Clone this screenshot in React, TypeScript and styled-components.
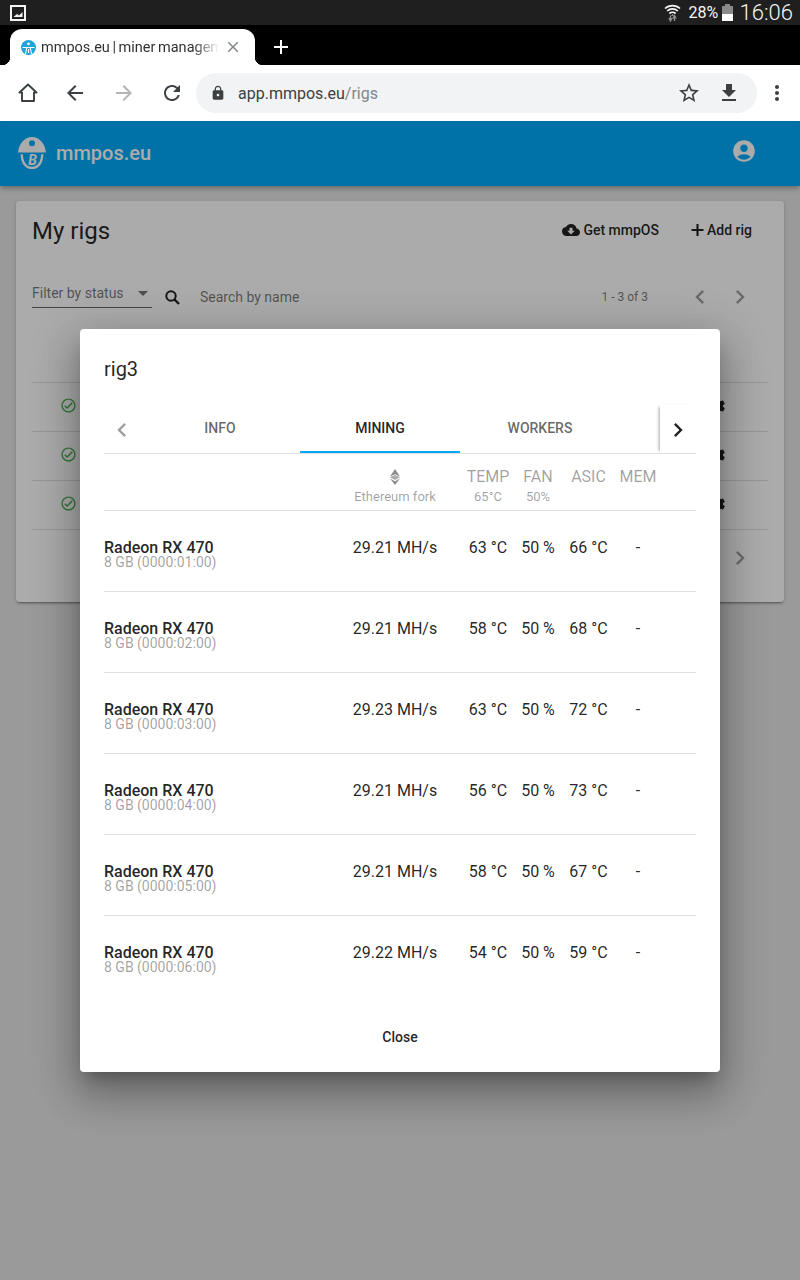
import styled, { createGlobalStyle } from 'styled-components';
import {
  MdAccountCircle,
  MdAdd,
  MdArrowBack,
  MdArrowDropDown,
  MdArrowForward,
  MdChevronLeft,
  MdChevronRight,
  MdClose,
  MdCloudDownload,
  MdFileDownload,
  MdLock,
  MdMoreVert,
  MdOutlineCheckCircle,
  MdRefresh,
  MdSettings,
  MdStarBorder,
} from 'react-icons/md';

const GlobalStyle = createGlobalStyle`
  html, body {
    margin: 0;
    padding: 0;
    background: #e6e6e6;
    font-family: Roboto, "Liberation Sans", sans-serif;
  }
  * {
    box-sizing: border-box;
  }
`;

const Shell = styled.div`
  width: 800px;
  height: 1280px;
  display: flex;
  flex-direction: column;
  overflow: hidden;
`;

const StatusBar = styled.div`
  height: 25px;
  flex: none;
  background: #1f1f1f;
  color: #f5f5f5;
  display: flex;
  align-items: center;
  padding: 0 7px 0 10px;
`;

const StatusRight = styled.div`
  margin-left: auto;
  display: flex;
  align-items: center;
`;

const Percent = styled.span`
  font-size: 16px;
  margin-left: 8px;
  width: 33px;
`;

const Clock = styled.span`
  font-size: 22px;
  font-weight: 300;
  margin-left: 7px;
`;

const TabStrip = styled.div`
  height: 40px;
  flex: none;
  background: #000;
  display: flex;
  align-items: flex-end;
  padding-left: 10px;
`;

const Tab = styled.div`
  position: relative;
  width: 245px;
  height: 36px;
  background: #fff;
  border-radius: 12px 12px 0 0;
  display: flex;
  align-items: center;
  padding: 0 13px 0 11px;
  color: #3c4043;

  &::before,
  &::after {
    content: '';
    position: absolute;
    bottom: 0;
    width: 8px;
    height: 8px;
  }
  &::before {
    left: -8px;
    background: radial-gradient(circle at 0 0, #000 8px, #fff 8.5px);
  }
  &::after {
    right: -8px;
    background: radial-gradient(circle at 100% 0, #000 8px, #fff 8.5px);
  }
`;

const TabTitle = styled.span`
  flex: 1;
  margin: 0 5px;
  font-size: 14.5px;
  word-spacing: -1px;
  white-space: nowrap;
  overflow: hidden;
  color: #303134;
  -webkit-mask-image: linear-gradient(to right, #000 86%, transparent 100%);
  mask-image: linear-gradient(to right, #000 86%, transparent 100%);
`;

const NewTab = styled.div`
  color: #fff;
  display: flex;
  margin: 0 0 6px 14px;
`;

const Toolbar = styled.div`
  height: 56px;
  flex: none;
  background: #fff;
  display: grid;
  grid-template-columns: 56px 38px 60px 36px 1fr 40px;
  align-items: center;
  padding-right: 3px;
`;

const ToolButton = styled.div<{ $muted?: boolean }>`
  display: flex;
  justify-content: center;
  color: ${(p) => (p.$muted ? '#b4b5b7' : '#3c4043')};
`;

const Omnibox = styled.div`
  height: 40px;
  margin-left: 6px;
  border-radius: 20px;
  background: #f1f3f4;
  display: flex;
  align-items: center;
  color: #3c4043;
  padding: 0 16px 0 14px;
`;

const Url = styled.div`
  font-size: 16px;
  margin-left: 12px;
  flex: 1;
  color: #3c4043;

  span {
    color: #80868b;
  }
`;

const OmniActions = styled.div`
  display: flex;
  gap: 16px;
  align-items: center;
`;

const AppArea = styled.div`
  position: relative;
  flex: 1;
  background: #e6e6e6;
`;

const AppBar = styled.header`
  height: 65px;
  background: #00abfa;
  color: #fff;
  display: flex;
  align-items: center;
  padding: 0 43px 1px 18px;
  box-shadow: 0 2px 4px -1px rgba(0, 0, 0, 0.2), 0 4px 5px rgba(0, 0, 0, 0.14);
`;

const Brand = styled.div`
  font-size: 20px;
  font-weight: 500;
  margin-left: 10px;
  flex: 1;
`;

const AccountIcon = styled(MdAccountCircle)`
  margin-bottom: 4px;
`;

const Card = styled.section`
  margin: 15px 16px 0;
  height: 401px;
  background: #fff;
  border-radius: 4px;
  padding: 0 16px;
  box-shadow: 0 3px 1px -2px rgba(0, 0, 0, 0.2), 0 2px 2px rgba(0, 0, 0, 0.14), 0 1px 5px rgba(0, 0, 0, 0.12);
  color: rgba(0, 0, 0, 0.87);
`;

const CardHead = styled.div`
  height: 60px;
  display: flex;
  align-items: center;
`;

const Heading = styled.h1`
  font-size: 24px;
  font-weight: 400;
  margin: 0;
  flex: 1;
`;

const TextAction = styled.div`
  display: flex;
  align-items: center;
  gap: 3px;
  font-size: 14px;
  font-weight: 500;
  margin-right: 16px;
  padding-bottom: 2px;

  & + & {
    margin-left: 16px;
  }
`;

const FilterRow = styled.div`
  height: 72px;
  display: flex;
  align-items: center;
  color: rgba(0, 0, 0, 0.54);
`;

const Select = styled.div`
  width: 120px;
  height: 29px;
  margin-top: -8px;
  border-bottom: 1px solid rgba(0, 0, 0, 0.6);
  display: flex;
  align-items: center;
  justify-content: space-between;
  font-size: 14px;
  padding-top: 1px;
`;

const SelectArrow = styled(MdArrowDropDown)`
  margin-right: -3px;
`;

const SearchIcon = styled.div`
  margin-left: 13px;
  display: flex;
  color: rgba(0, 0, 0, 0.87);
`;

const SearchLabel = styled.div`
  margin-left: 20px;
  flex: 1;
  font-size: 14px;
`;

const RangeLabel = styled.div`
  font-size: 12px;
`;

const Pager = styled.div`
  display: flex;
  gap: 12px;
  margin: 0 14px 0 38px;
  color: rgba(0, 0, 0, 0.38);
`;

const RigRow = styled.div`
  height: 49px;
  border-top: 1px solid rgba(0, 0, 0, 0.12);
  display: flex;
  align-items: center;
  justify-content: space-between;
  padding: 0 41px 3px 28px;
`;

const RigsTable = styled.div`
  margin-top: 49px;
  border-bottom: 1px solid rgba(0, 0, 0, 0.12);
`;

const RigStatus = styled.div`
  display: flex;
  color: #4caf50;
`;

const RigTool = styled.div`
  display: flex;
  color: rgba(0, 0, 0, 0.87);
`;

const CardFoot = styled.div`
  display: flex;
  justify-content: flex-end;
  padding: 14px 14px 0 0;
  color: rgba(0, 0, 0, 0.38);
`;

const Backdrop = styled.div`
  position: absolute;
  inset: 0;
  background: rgba(0, 0, 0, 0.33);
  display: flex;
  align-items: center;
  justify-content: center;
`;

const Dialog = styled.div`
  width: 640px;
  height: 743px;
  background: #fff;
  border-radius: 4px;
  padding: 24px 24px 0;
  display: flex;
  flex-direction: column;
  color: rgba(0, 0, 0, 0.87);
  box-shadow: 0 11px 15px -7px rgba(0, 0, 0, 0.26), 0 24px 38px 3px rgba(0, 0, 0, 0.2), 0 9px 46px 8px rgba(0, 0, 0, 0.16);
`;

const DialogTitle = styled.h2`
  font-size: 20px;
  font-weight: 400;
  line-height: 32px;
  margin: 0 0 20px;
`;

const TabBar = styled.div`
  height: 49px;
  flex: none;
  display: flex;
  border-bottom: 1px solid #e0e0e0;
`;

const ScrollButton = styled.div<{ $active?: boolean }>`
  width: 36px;
  flex: none;
  display: flex;
  align-items: center;
  justify-content: center;
  padding-top: 2px;
  color: ${(p) => (p.$active ? 'rgba(0, 0, 0, 0.87)' : 'rgba(0, 0, 0, 0.38)')};
  ${(p) => p.$active && 'box-shadow: -3px 0 3px -2px rgba(0, 0, 0, 0.35);'}
`;

const TabList = styled.div`
  flex: 1;
  display: flex;
`;

const TabLabel = styled.div<{ $active?: boolean }>`
  width: 160px;
  display: flex;
  align-items: center;
  justify-content: center;
  font-size: 14px;
  font-weight: 500;
  color: ${(p) => (p.$active ? 'rgba(0, 0, 0, 0.87)' : 'rgba(0, 0, 0, 0.6)')};
  border-bottom: 2px solid ${(p) => (p.$active ? '#03a9f4' : 'transparent')};
`;

const GridRow = styled.div`
  display: grid;
  grid-template-columns: 223px 136px 50px 50px 51px 48px;
  text-align: center;
`;

const HeadRow = styled(GridRow)`
  height: 57px;
  flex: none;
  border-bottom: 1px solid #e0e0e0;
  color: rgba(0, 0, 0, 0.38);
  padding-top: 13px;
`;

const HeadCell = styled.div`
  font-size: 16px;
  line-height: 19px;
`;

const HeadSub = styled.div`
  font-size: 13px;
  line-height: 15px;
  margin-top: 3px;
  white-space: nowrap;
`;

const HashIcon = styled.div`
  display: flex;
  justify-content: center;
  padding-top: 2px;
  height: 19px;
`;

const WorkerRow = styled(GridRow)<{ $last?: boolean }>`
  height: 81px;
  flex: none;
  padding-top: 27px;
  font-size: 16px;
  line-height: 20px;
  border-bottom: ${(p) => (p.$last ? 'none' : '1px solid #e0e0e0')};
`;

const NameCell = styled.div`
  text-align: left;
  padding-top: 2px;
`;

const GpuName = styled.div`
  font-weight: 500;
  line-height: 16px;
`;

const GpuInfo = styled.div`
  font-size: 14px;
  line-height: 12px;
  color: rgba(0, 0, 0, 0.38);
`;

const Actions = styled.div`
  display: flex;
  justify-content: center;
  margin-top: 30px;
  font-size: 14px;
  font-weight: 500;
  line-height: 20px;
`;

const workers = [
  { bus: '01', hash: '29.21', temp: 63, asic: 66 },
  { bus: '02', hash: '29.21', temp: 58, asic: 68 },
  { bus: '03', hash: '29.23', temp: 63, asic: 72 },
  { bus: '04', hash: '29.21', temp: 56, asic: 73 },
  { bus: '05', hash: '29.21', temp: 58, asic: 67 },
  { bus: '06', hash: '29.22', temp: 54, asic: 59 },
];

const PictureIcon = () => (
  <svg width="16" height="16" viewBox="0 0 16 16">
    <rect x="1" y="1" width="14" height="14" fill="#1f1f1f" stroke="#f5f5f5" strokeWidth="2" />
    <path d="M3.5 12 L7 9 L9 10.5 L12.5 7 V12 Z" fill="#f5f5f5" />
  </svg>
);

const WifiIcon = () => (
  <svg width="17" height="19" viewBox="0 0 17 19" fill="none">
    <path d="M1 5.5a11 11 0 0 1 15 0M3.2 8a7.8 7.8 0 0 1 10.6 0M5.4 10.5a4.6 4.6 0 0 1 6.2 0" stroke="#f5f5f5" strokeWidth="1.7" />
    <path d="M8.5 11.2l1.4 1.4H7.1Z" fill="#f5f5f5" />
    <path d="M6.5 12.5v4M4.8 15l1.7 3 1.7-3M10.5 18v-4.5M8.8 15.5l1.7-3 1.7 3" stroke="#8f8f8f" strokeWidth="1.3" />
  </svg>
);

const BatteryIcon = () => (
  <svg width="11" height="17" viewBox="0 0 11 17">
    <rect x="3" y="0" width="5" height="2" fill="#8a8a8a" />
    <rect x="0" y="2" width="11" height="8" fill="#8a8a8a" />
    <rect x="0" y="10" width="11" height="7" fill="#fff" />
  </svg>
);

const Favicon = () => (
  <svg width="15" height="15" viewBox="0 0 15 15">
    <circle cx="7.5" cy="7.5" r="7.5" fill="#1fa3dc" />
    <path d="M1.5 7.5h12M4.5 14l1.2-6M10.5 14L9.3 8M7.5 9v4" stroke="#fff" strokeWidth="1.1" fill="none" />
    <circle cx="7.5" cy="3.8" r="1.4" fill="#fff" />
  </svg>
);

const HomeIcon = () => (
  <svg width="20" height="20" viewBox="0 0 20 20">
    <path d="M10 1.5L1.5 9.5H4V18H16V9.5H18.5Z" fill="none" stroke="currentColor" strokeWidth="1.9" strokeLinejoin="round" />
  </svg>
);

const EtherIcon = () => (
  <svg width="10" height="16" viewBox="0 0 10 16" fill="#8d8d8d">
    <path d="M5 0L10 7.6 5 5.2 0 7.6Z" />
    <path d="M0 8.3L5 5.9 10 8.3 5 11Z" opacity="0.75" />
    <path d="M0 9.4L5 12.2 10 9.4 5 16Z" />
  </svg>
);

const PlusIcon = () => (
  <svg width="13" height="12" viewBox="0 0 13 12">
    <path d="M0.5 6H12.5M6.5 0V12" stroke="currentColor" strokeWidth="2.1" />
  </svg>
);

const SearchGlyph = () => (
  <svg width="15" height="15" viewBox="0 0 15 15" fill="none">
    <circle cx="6" cy="6" r="4.7" stroke="currentColor" strokeWidth="2" />
    <path d="M9.5 9.5L14 14" stroke="currentColor" strokeWidth="2.4" />
  </svg>
);

const BrandLogo = () => (
  <svg width="28" height="32" viewBox="0 0 28 32">
    <path fillRule="evenodd" d="M0 15.5C1 6 7 0 14 0S27 6 28 15.5ZM14 3.2a3 3 0 1 0 0 6 3 3 0 0 0 0-6Z" fill="#fff" />
    <path d="M3.8 17.2C3.8 25.5 8 31 14 31S24.2 25.5 24.2 17.2" fill="none" stroke="#fff" strokeWidth="2.4" />
    <text x="14.5" y="27.5" textAnchor="middle" fontSize="14" fontWeight="700" fontStyle="italic" fill="#fff" fontFamily="Roboto, sans-serif">
      B
    </text>
  </svg>
);

const App = () => {
  return (
    <Shell>
      <GlobalStyle />
      <StatusBar>
        <PictureIcon />
        <StatusRight>
          <WifiIcon />
          <Percent>28%</Percent>
          <BatteryIcon />
          <Clock>16:06</Clock>
        </StatusRight>
      </StatusBar>
      <TabStrip>
        <Tab>
          <Favicon />
          <TabTitle>mmpos.eu | miner management</TabTitle>
          <MdClose size={18} color="#80868b" />
        </Tab>
        <NewTab>
          <MdAdd size={24} />
        </NewTab>
      </TabStrip>
      <Toolbar>
        <ToolButton>
          <HomeIcon />
        </ToolButton>
        <ToolButton>
          <MdArrowBack size={24} />
        </ToolButton>
        <ToolButton $muted>
          <MdArrowForward size={24} />
        </ToolButton>
        <ToolButton>
          <MdRefresh size={24} />
        </ToolButton>
        <Omnibox>
          <MdLock size={16} color="#3c4043" />
          <Url>
            app.mmpos.eu<span>/rigs</span>
          </Url>
          <OmniActions>
            <MdStarBorder size={24} />
            <MdFileDownload size={24} />
          </OmniActions>
        </Omnibox>
        <ToolButton>
          <MdMoreVert size={24} />
        </ToolButton>
      </Toolbar>
      <AppArea>
        <AppBar>
          <BrandLogo />
          <Brand>mmpos.eu</Brand>
          <AccountIcon size={26} />
        </AppBar>
        <Card>
          <CardHead>
            <Heading>My rigs</Heading>
            <TextAction>
              <MdCloudDownload size={18} />
              Get mmpOS
            </TextAction>
            <TextAction>
              <PlusIcon />
              Add rig
            </TextAction>
          </CardHead>
          <FilterRow>
            <Select>
              Filter by status
              <SelectArrow size={24} />
            </Select>
            <SearchIcon>
              <SearchGlyph />
            </SearchIcon>
            <SearchLabel>Search by name</SearchLabel>
            <RangeLabel>1 - 3 of 3</RangeLabel>
            <Pager>
              <MdChevronLeft size={28} />
              <MdChevronRight size={28} />
            </Pager>
          </FilterRow>
          <RigsTable>
            {[1, 2, 3].map((rig) => (
              <RigRow key={rig}>
                <RigStatus>
                  <MdOutlineCheckCircle size={17} />
                </RigStatus>
                <RigTool>
                  <MdSettings size={20} />
                </RigTool>
              </RigRow>
            ))}
          </RigsTable>
          <CardFoot>
            <MdChevronRight size={28} />
          </CardFoot>
        </Card>
        <Backdrop>
          <Dialog>
            <DialogTitle>rig3</DialogTitle>
            <TabBar>
              <ScrollButton>
                <MdChevronLeft size={28} />
              </ScrollButton>
              <TabList>
                <TabLabel>INFO</TabLabel>
                <TabLabel $active>MINING</TabLabel>
                <TabLabel>WORKERS</TabLabel>
              </TabList>
              <ScrollButton $active>
                <MdChevronRight size={28} />
              </ScrollButton>
            </TabBar>
            <HeadRow>
              <div />
              <div>
                <HashIcon>
                  <EtherIcon />
                </HashIcon>
                <HeadSub>Ethereum fork</HeadSub>
              </div>
              <div>
                <HeadCell>TEMP</HeadCell>
                <HeadSub>65°C</HeadSub>
              </div>
              <div>
                <HeadCell>FAN</HeadCell>
                <HeadSub>50%</HeadSub>
              </div>
              <HeadCell>ASIC</HeadCell>
              <HeadCell>MEM</HeadCell>
            </HeadRow>
            {workers.map((worker, index) => (
              <WorkerRow key={worker.bus} $last={index === workers.length - 1}>
                <NameCell>
                  <GpuName>Radeon RX 470</GpuName>
                  <GpuInfo>8 GB (0000:{worker.bus}:00)</GpuInfo>
                </NameCell>
                <div>{worker.hash} MH/s</div>
                <div>{worker.temp} °C</div>
                <div>50 %</div>
                <div>{worker.asic} °C</div>
                <div>-</div>
              </WorkerRow>
            ))}
            <Actions>Close</Actions>
          </Dialog>
        </Backdrop>
      </AppArea>
    </Shell>
  );
};

export default App;
